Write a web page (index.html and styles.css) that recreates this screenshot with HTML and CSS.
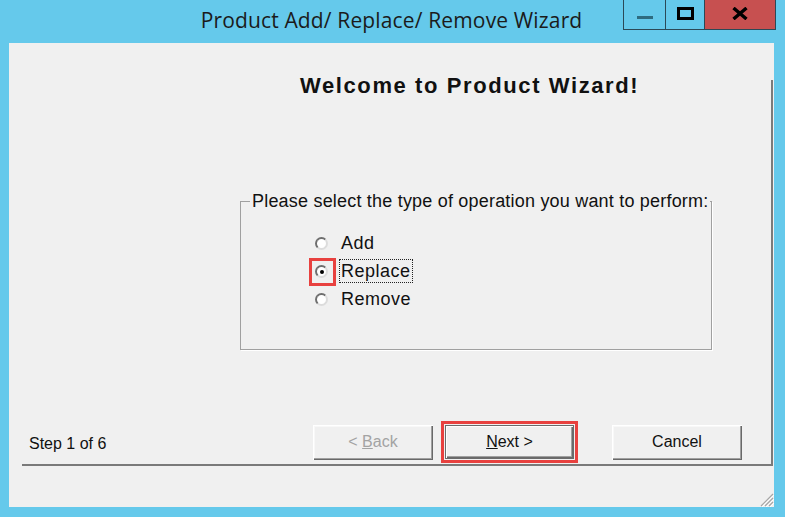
FILE: index.html
```html
<!DOCTYPE html>
<html lang="en">
<head>
    <meta charset="UTF-8">
    <meta name="viewport" content="width=device-width, initial-scale=1.0">
    <title>Product Add/ Replace/ Remove Wizard</title>
    <link rel="stylesheet" href="styles.css">
</head>
<body>
 <div class="window">
  <div class="titlebar">
   <div class="title">Product Add/ Replace/ Remove Wizard</div>
   <div class="controls">
    <span class="ctl ctl-min"><i></i></span>
    <span class="ctl ctl-max"><i></i></span>
    <span class="ctl ctl-close">
     <svg width="16" height="13" viewBox="0 0 16 13">
      <path d="M1.5 1 L14.5 12 M14.5 1 L1.5 12" stroke="#000" stroke-width="3.4" fill="none"/>
     </svg>
    </span>
   </div>
  </div>

  <div class="client">
   <div class="frame">
    <h1 class="heading">Welcome to Product Wizard!</h1>

    <fieldset class="group">
     <legend>Please select the type of operation you want to perform:</legend>
     <div class="options">
      <div class="option">
       <span class="radio"></span>
       <span class="label">Add</span>
      </div>
      <div class="option">
       <span class="radio checked"><span class="mark"></span></span>
       <span class="label focus">Replace</span>
      </div>
      <div class="option">
       <span class="radio"></span>
       <span class="label">Remove</span>
      </div>
     </div>
    </fieldset>

    <div class="bottom">
     <span class="step">Step 1 of 6</span>
     <div class="buttons">
      <button class="btn btn-back" disabled>&lt; <u>B</u>ack</button>
      <span class="highlight"><button class="btn btn-default"><u>N</u>ext &gt;</button></span>
      <button class="btn btn-cancel">Cancel</button>
     </div>
    </div>
   </div>

   <div class="statusbar">
    <svg class="grip" width="15" height="15" viewBox="0 0 15 15">
     <path d="M14 2 L2 14 M14 6 L6 14 M14 10 L10 14" stroke="#a6a6a6" stroke-width="1.2" fill="none"/>
     <path d="M15 3 L3 15 M15 7 L7 15 M15 11 L11 15" stroke="#ffffff" stroke-width="1" fill="none"/>
    </svg>
   </div>
  </div>
 </div>
</body>
</html>
```

FILE: styles.css
```css
body {
    margin: 0;
    width: 785px;
    height: 517px;
    overflow: hidden;
    background-color: #65c9eb;
    font-family: "Liberation Sans", Arial, sans-serif;
    color: #111;
}

.window {
    display: flex;
    flex-direction: column;
    height: 100%;
}

/* title bar */
.titlebar {
    position: relative;
    height: 43px;
}
.title {
    font-family: "Open Sans", "Noto Sans", sans-serif;
    font-size: 21px;
    letter-spacing: 0.15px;
    color: #1b1b1b;
    text-align: center;
    line-height: 28px;
    padding-top: 6px;
    padding-right: 2px;
}
.controls {
    position: absolute;
    top: 0;
    right: 9px;
    display: flex;
    border: 1px solid #2b4957;
    border-top: none;
}
.ctl {
    height: 29px;
    display: flex;
    align-items: center;
    justify-content: center;
}
.ctl-min {
    width: 41px;
    border-right: 1px solid #2b4957;
}
.ctl-min i {
    width: 16px;
    height: 3px;
    margin-top: 6px;
    background-color: #2e6b80;
}
.ctl-max {
    width: 38px;
    border-right: 1px solid #2b4957;
}
.ctl-max i {
    width: 17px;
    height: 13px;
    box-sizing: border-box;
    border: 3px solid #000;
    margin-bottom: 3px;
}
.ctl-close {
    width: 70px;
    background-color: #c75050;
}
.ctl-close svg {
    margin-bottom: 3px;
}

/* client area */
.client {
    flex: 1;
    margin: 0 11px 10px 9px;
    background-color: #f0f0f0;
    display: flex;
    flex-direction: column;
}
.frame {
    margin-left: 13px;
    margin-right: 1px;
    height: 421px;
    border-bottom: 2px solid #7a7a7a;
    background: linear-gradient(#7a7a7a, #7a7a7a) right 37px / 2px calc(100% - 37px) no-repeat;
    display: flex;
    flex-direction: column;
}
.heading {
    margin: 31px 0 0 0;
    padding-left: 278px;
    font-size: 22px;
    line-height: 24px;
    font-weight: bold;
    letter-spacing: 1.6px;
    color: #111;
}

/* group box */
.group {
    margin: 93px 0 0 218px;
    width: 472px;
    box-sizing: border-box;
    padding: 0;
    border: 1px solid #a0a0a0;
    box-shadow: 1px 1px 0 #fff;
    min-inline-size: 0;
}
.group legend {
    margin-left: 9px;
    padding: 0 2px;
    font-size: 18px;
    line-height: 20px;
    letter-spacing: 0.2px;
    white-space: nowrap;
    color: #111;
}
.options {
    padding: 18px 0 36px 74px;
}
.option {
    height: 28px;
    display: flex;
    align-items: center;
}
.radio {
    position: relative;
    width: 13px;
    height: 13px;
    box-sizing: border-box;
    border-radius: 50%;
    border: 2px solid;
    border-color: #6e6e6e #dcdcdc #dcdcdc #6e6e6e;
    background-color: #fff;
    margin-top: 1px;
}
.radio.checked::after {
    content: "";
    position: absolute;
    left: 2.5px;
    top: 2.5px;
    width: 4px;
    height: 4px;
    border-radius: 50%;
    background-color: #000;
}
.mark {
    position: absolute;
    left: -8px;
    top: -9px;
    width: 27px;
    height: 28px;
    box-sizing: border-box;
    border: 3px solid #e8413f;
}
.label {
    margin-left: 11px;
    padding: 1px;
    border: 1px dotted transparent;
    font-size: 18px;
    line-height: 20px;
    letter-spacing: 0.5px;
}
.label.focus { border-color: #222; }

/* bottom row */
.bottom {
    margin-top: auto;
    padding-bottom: 1px;
    display: flex;
    align-items: center;
}
.step {
    margin-left: 7px;
    margin-top: 3px;
    font-size: 16px;
}
.buttons {
    margin-left: auto;
    margin-right: 31px;
    display: flex;
    align-items: center;
}
.btn {
    height: 35px;
    padding: 0;
    border: none;
    background-color: #f0f0f0;
    font-family: "Liberation Sans", Arial, sans-serif;
    font-size: 16px;
    color: #111;
    box-shadow: inset 1px 1px 0 #fff, inset -1px -1px 0 #696969, inset -2px -2px 0 #a0a0a0, inset 2px 2px 0 #f8f8f8;
}
.btn-back {
    width: 120px;
    color: #a3a3a3;
}
.highlight {
    margin-left: 8px;
    padding: 1px;
    border: 3px solid #e8413f;
    display: flex;
}
.btn-default {
    width: 129px;
    height: 34px;
    box-shadow: inset 0 0 0 1px #6a6a6a, inset 2px 2px 0 #fff, inset -2px -2px 0 #6a6a6a, inset -3px -3px 0 #a0a0a0;
}
.btn-cancel {
    width: 130px;
    margin-left: 34px;
}

.statusbar {
    flex: 1;
    display: flex;
    align-items: flex-end;
    justify-content: flex-end;
}
```
